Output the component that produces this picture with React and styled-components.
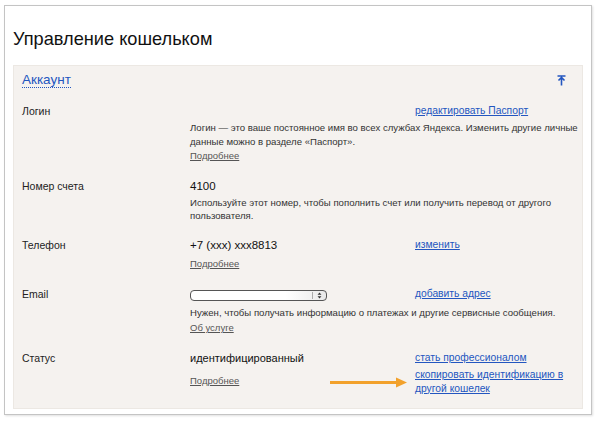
import styled, { createGlobalStyle } from "styled-components";

const GlobalStyle = createGlobalStyle`
  body {
    margin: 0;
    background: #ffffff;
    font-family: "Liberation Sans", Arial, sans-serif;
    color: #222;
  }
`;

export default function App() {
  return (
    <>
      <GlobalStyle />
      <Frame>
        <Title>Управление кошельком</Title>
        <Panel>
          <PanelHead>
            <SectionLink>Аккаунт</SectionLink>
            <CollapseIcon viewBox="0 0 9 11">
              <path d="M0.5 1h8M4.5 2.5v8M1.5 5.5l3-3 3 3" />
            </CollapseIcon>
          </PanelHead>

          <Row>
            <Label>Логин</Label>
            <Body>
              <TopLine>
                <Value />
                <Actions>
                  <ActionLink>редактировать Паспорт</ActionLink>
                </Actions>
              </TopLine>
              <Desc>
                Логин — это ваше постоянное имя во всех службах Яндекса. Изменить другие личные
                данные можно в разделе «Паспорт».
              </Desc>
              <More>Подробнее</More>
            </Body>
          </Row>

          <Row>
            <Label>Номер счета</Label>
            <Body>
              <TopLine>
                <Value $big>4100</Value>
              </TopLine>
              <Desc $tight>
                Используйте этот номер, чтобы пополнить счет или получить перевод от другого
                пользователя.
              </Desc>
            </Body>
          </Row>

          <Row>
            <Label>Телефон</Label>
            <Body>
              <TopLine>
                <Value $big>+7 (xxx) xxx8813</Value>
                <Actions>
                  <ActionLink>изменить</ActionLink>
                </Actions>
              </TopLine>
              <More $gap={5}>Подробнее</More>
            </Body>
          </Row>

          <Row>
            <Label>Email</Label>
            <Body>
              <TopLine>
                <Value>
                  <SelectBox>
                    <SelectArrows viewBox="0 0 6 9">
                      <path d="M3 0.5L5.5 3.5H0.5z M3 8.5L5.5 5.5H0.5z" />
                    </SelectArrows>
                  </SelectBox>
                </Value>
                <Actions>
                  <ActionLink>добавить адрес</ActionLink>
                </Actions>
              </TopLine>
              <Desc $gap={5}>
                Нужен, чтобы получать информацию о платежах и другие сервисные сообщения.
              </Desc>
              <More $gap={1}>Об услуге</More>
            </Body>
          </Row>

          <Row>
            <Label>Статус</Label>
            <Body>
              <TopLine>
                <Value>
                  <ValueText>идентифицированный</ValueText>
                  <More $gap={9}>Подробнее</More>
                </Value>
                <Actions>
                  <ActionLink>стать профессионалом</ActionLink>
                  <ActionLink $gap={3}>скопировать идентификацию в другой кошелек</ActionLink>
                </Actions>
              </TopLine>
              <Pointer viewBox="0 0 78 12">
                <path d="M0 6.5H68" stroke="#f2a12b" strokeWidth="3" />
                <path d="M66 1.5L77 6.5L66 11.5z" fill="#f2a12b" />
              </Pointer>
            </Body>
          </Row>
        </Panel>
      </Frame>
    </>
  );
}

const Frame = styled.div`
  margin: 5px 8px 8px 4px;
  width: 570px;
  border: 1px solid #c4c4c4;
  box-shadow: 1px 1px 2px rgba(0, 0, 0, 0.12);
  padding: 21px 8px 5px 8px;
`;

const Title = styled.h1`
  margin: 0 0 14px 0;
  font-size: 18.2px;
  line-height: 24px;
  font-weight: normal;
  color: #111;
`;

const Panel = styled.div`
  background: #f5f2ef;
  border: 1px solid #ece8e3;
  padding: 6px 15px 13px 8px;
`;

const PanelHead = styled.div`
  display: flex;
  justify-content: space-between;
  align-items: center;
  height: 17px;
  margin-bottom: 15px;
`;

const SectionLink = styled.span`
  font-size: 13.5px;
  color: #2356c0;
  border-bottom: 1px dotted #2356c0;
  line-height: 14px;
  cursor: pointer;
`;

const CollapseIcon = styled.svg`
  width: 9px;
  height: 11px;
  margin-right: 1px;
  fill: none;
  stroke: #2356c0;
  stroke-width: 1.6;
`;

const Row = styled.div`
  display: flex;
  margin-bottom: 16px;
  &:last-child {
    margin-bottom: 0;
  }
`;

const Label = styled.div`
  width: 168px;
  flex-shrink: 0;
  font-size: 10.5px;
  line-height: 14px;
  color: #222;
`;

const Body = styled.div`
  position: relative;
  display: flex;
  flex-direction: column;
  align-items: flex-start;
`;

const TopLine = styled.div`
  display: flex;
`;

const Value = styled.div`
  width: 225px;
  flex-shrink: 0;
  font-size: ${(p) => (p.$big ? "11.5px" : "11px")};
  line-height: 14px;
  color: #111;
`;

const ValueText = styled.div`
  font-size: 11px;
  line-height: 14px;
`;

const Actions = styled.div`
  width: 152px;
  display: flex;
  flex-direction: column;
`;

const ActionLink = styled.a`
  display: block;
  font-size: 10.3px;
  line-height: ${(p) => (p.$gap ? "13.5px" : "14px")};
  margin-top: ${(p) => p.$gap || 0}px;
  color: #2356c0;
  text-decoration: underline;
  cursor: pointer;
`;

const Desc = styled.div`
  width: 392px;
  margin-top: ${(p) => (p.$gap !== undefined ? p.$gap : 3)}px;
  font-size: 9.6px;
  line-height: ${(p) => (p.$tight ? "13px" : "14px")};
  color: #333;
`;

const More = styled.a`
  display: block;
  width: fit-content;
  margin-top: ${(p) => p.$gap || 0}px;
  font-size: 9.5px;
  line-height: 14px;
  color: #555;
  text-decoration: underline;
  cursor: pointer;
`;

const SelectBox = styled.div`
  margin-top: 3px;
  width: 135px;
  height: 9px;
  border: 1px solid #555;
  border-radius: 4px;
  background: linear-gradient(to right, #fff 70%, #e8e8e8);
  display: flex;
  justify-content: flex-end;
  align-items: center;
`;

const SelectArrows = styled.svg`
  width: 5px;
  height: 7px;
  padding: 0 4px;
  border-left: 1px solid #aaa;
  fill: #333;
`;

const Pointer = styled.svg`
  position: absolute;
  left: 140px;
  top: 25px;
  width: 78px;
  height: 12px;
`;
